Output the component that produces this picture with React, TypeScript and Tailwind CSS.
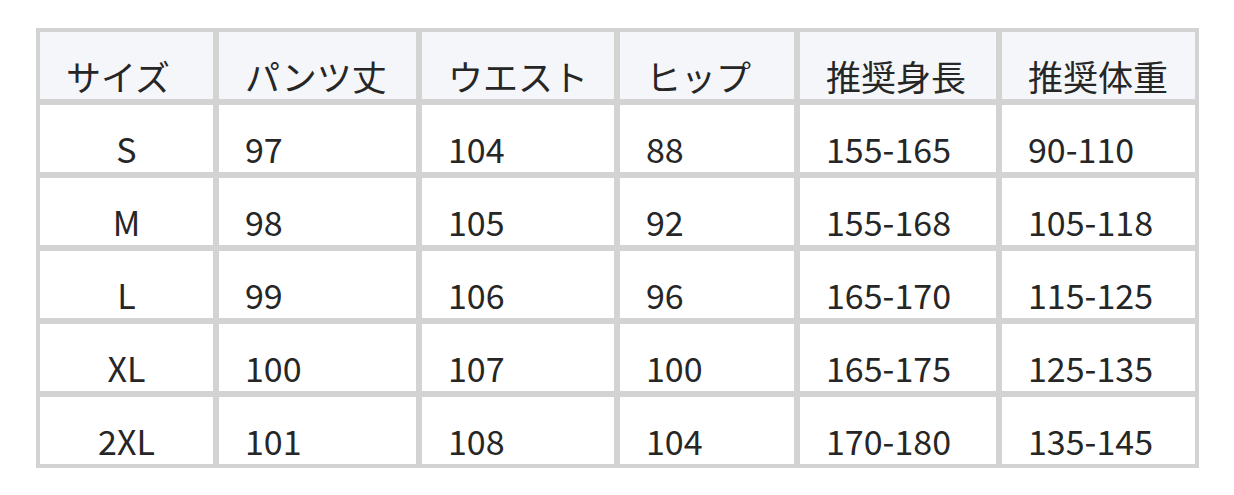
const cols = ["w-[173px]", "w-[197px]", "w-[192px]", "w-[174px]", "w-[196px]", "w-[193px]"];

const header = ["サイズ", "パンツ丈", "ウエスト", "ヒップ", "推奨身長", "推奨体重"];

const rows = [
  ["S", "97", "104", "88", "155-165", "90-110"],
  ["M", "98", "105", "92", "155-168", "105-118"],
  ["L", "99", "106", "96", "165-170", "115-125"],
  ["XL", "100", "107", "100", "165-175", "125-135"],
  ["2XL", "101", "108", "104", "170-180", "135-145"],
];

export default function App() {
  return (
    <div
      className="w-[1234px] h-[495px] bg-white pt-[28px] pl-[36px] text-[#262626]"
      style={{ fontFamily: '"Noto Sans CJK JP", "Noto Sans", sans-serif' }}
    >
      <div className="inline-flex flex-col gap-[6px] bg-[#d3d3d3] p-[4px]">
        <div className="flex gap-[6px]">
          {header.map((h, i) => (
            <div
              key={h}
              className={`${cols[i]} h-[67px] bg-[#f5f6fa] flex items-center pt-[19px] pl-[26px] text-[35px] leading-none`}
            >
              {h}
            </div>
          ))}
        </div>
        {rows.map((r) => (
          <div key={r[0]} className="flex gap-[6px]">
            {r.map((c, i) => (
              <div
                key={i}
                className={`${cols[i]} h-[67px] bg-white flex items-center pt-[20px] text-[34px] leading-none ${
                  i === 0 ? "justify-center" : "pl-[26px]"
                }`}
              >
                {c}
              </div>
            ))}
          </div>
        ))}
      </div>
    </div>
  );
}
